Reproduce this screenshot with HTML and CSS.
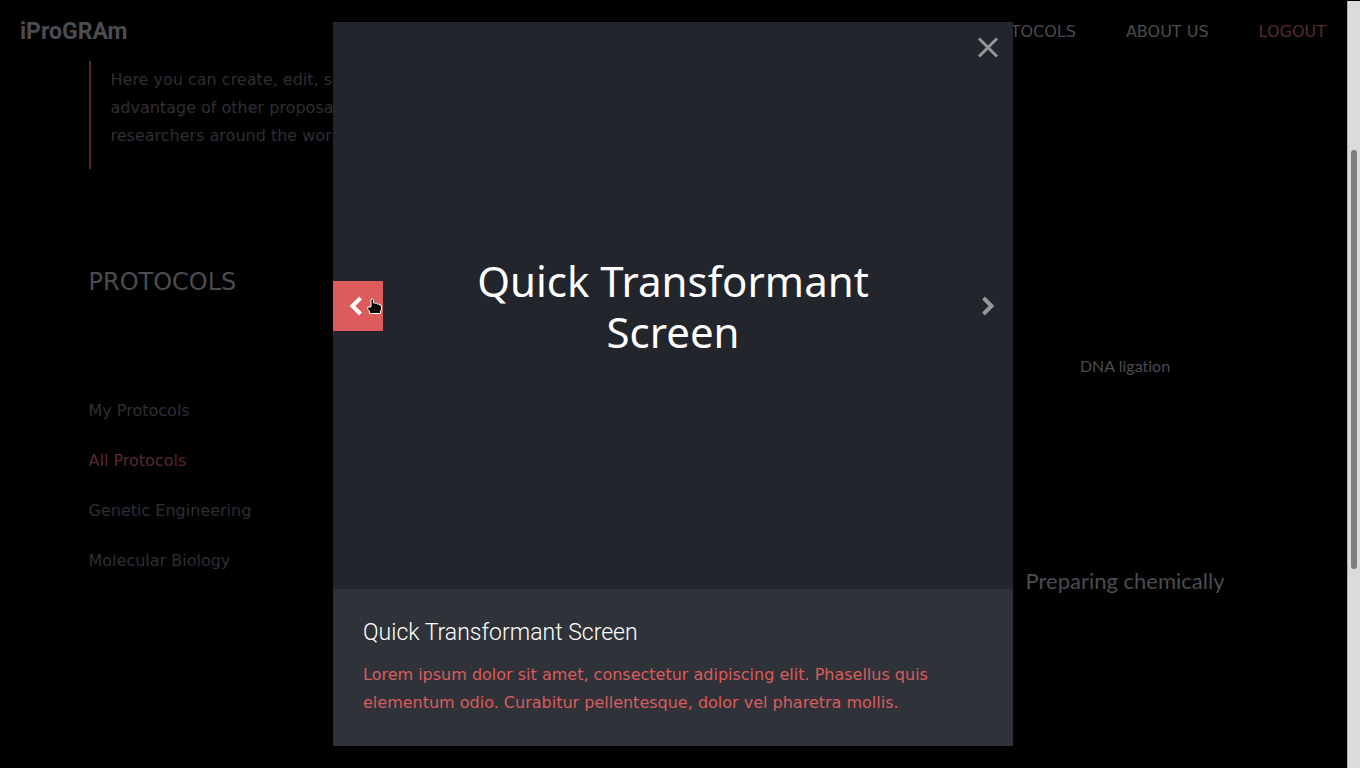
FILE: index.html
```html
<!DOCTYPE html>
<html lang="en">
<head>
<meta charset="utf-8">
<meta name="viewport" content="width=device-width, initial-scale=1">
<title>iProGRAm</title>
<link rel="stylesheet" href="styles.css">
</head>
<body>
<div class="window">
  <div class="view">
    <header class="topbar">
      <a class="logo" href="#">iProGRAm</a>
      <nav class="nav">
        <a href="#">PROTOCOLS</a>
        <a href="#">ABOUT US</a>
        <a class="accent" href="#">LOGOUT</a>
      </nav>
    </header>
    <main class="container">
      <blockquote class="intro">Here you can create, edit, share<br>advantage of other proposals<br>researchers around the world</blockquote>
      <div class="columns">
        <aside class="sidebar">
          <h1 class="heading">PROTOCOLS</h1>
          <ul class="filters">
            <li><a href="#">My Protocols</a></li>
            <li><a class="accent" href="#">All Protocols</a></li>
            <li><a href="#">Genetic Engineering</a></li>
            <li><a href="#">Molecular Biology</a></li>
          </ul>
        </aside>
        <section class="tiles">
          <a class="tile tile-small" href="#">DNA ligation</a>
          <a class="tile tile-large" href="#">Preparing chemically</a>
        </section>
      </div>
    </main>

    <div class="overlay">
      <div class="dialog" role="dialog" aria-labelledby="dialog-title">
        <div class="slide">
          <p class="slide-text">Quick Transformant Screen</p>
          <button class="control close" aria-label="Close">
            <svg width="50" height="50" viewBox="0 0 50 50"><path d="M16 16.500 34 34.500M34 16.500 16 34.500"/></svg>
          </button>
          <button class="control prev" aria-label="Previous">
            <svg width="50" height="50" viewBox="0 0 50 50"><path d="M27.500 17 19.500 25l8 8"/></svg>
          </button>
          <button class="control next" aria-label="Next">
            <svg width="50" height="50" viewBox="0 0 50 50"><path d="M20.500 17 28.500 25l-8 8"/></svg>
          </button>
          <svg class="pointer" width="16" height="17" viewBox="0 0 16 17" aria-hidden="true">
            <path d="M4 1.500Q5.500 0 6.500 1.500V5Q8 4.500 8.500 5.500 10 5 10.500 6 12 5.500 12.500 7 14.500 6.500 14.500 8.500V12L13.500 13V15.500H2.500V13L.8 11.500V9H4Z"/>
            <path class="crease" d="M4.500 12h1M7 12h1M9.500 12h1M12 12h1"/>
          </svg>
        </div>
        <div class="caption">
          <h2 class="caption-title" id="dialog-title">Quick Transformant Screen</h2>
          <p class="caption-text">Lorem ipsum dolor sit amet, consectetur adipiscing elit. Phasellus quis elementum odio. Curabitur pellentesque, dolor vel pharetra mollis.</p>
        </div>
      </div>
    </div>
  </div>
  <div class="scroll-track"><div class="scroll-thumb"></div></div>
</div>
</body>
</html>
```
FILE: styles.css
```css
* { box-sizing: border-box; }

body {
  margin: 0;
  background: #000;
  color: #2f2e34;
  font: 16px/28px "DejaVu Sans", sans-serif;
}

a { color: inherit; text-decoration: none; }

.window {
  display: flex;
  height: 100vh;
  overflow: hidden;
}

.view {
  position: relative;
  flex: 1;
  min-width: 0;
  overflow: hidden;
}

.topbar {
  display: flex;
  align-items: center;
  justify-content: space-between;
  height: 61px;
  padding: 2px 21px 0 20px;
  color: #4c4b52;
}

.logo { font: 700 23px/28px Roboto, sans-serif; }

.nav { display: flex; gap: 50px; }

.accent,
.nav .accent { color: #582a2d; }

.container {
  max-width: 1170px;
  margin: 0 auto;
}

.intro {
  margin: 0;
  padding: 5px 0 19px 20px;
  border-left: 2px solid #5a2c2e;
}

.columns {
  display: flex;
  justify-content: space-between;
}

.heading {
  margin: 99px 0 101px;
  color: #4c4b52;
  font-weight: 400;
  font-size: 24px;
  line-height: 28px;
}

.filters {
  display: grid;
  gap: 22px;
  margin: 0;
  padding: 0;
  list-style: none;
}

.tiles {
  display: grid;
  align-content: start;
  gap: 30px;
  width: 267px;
  padding-top: 64px;
  color: #4c4b52;
  font-variant-ligatures: none;
  text-align: center;
}

.tile {
  height: 267px;
  font-family: Lato, sans-serif;
}

.tile-small {
  padding-top: 119px;
  font-size: 16px;
}

.tile-large {
  padding-top: 37px;
  font-size: 22px;
}

.overlay {
  position: absolute;
  inset: 0;
  display: flex;
  align-items: center;
  justify-content: center;
  padding-right: 1px;
}

.dialog {
  width: 680px;
  max-width: 100%;
  background: #2f3239;
}

.slide {
  position: relative;
  display: flex;
  align-items: center;
  justify-content: center;
  height: 567px;
  background: #22252c;
}

.slide-text {
  width: 440px;
  margin: 0;
  color: #fff;
  font: 42px/51px "Noto Sans", sans-serif;
  text-align: center;
}

.control {
  position: absolute;
  width: 50px;
  height: 50px;
  padding: 0;
  border: 0;
  background: #22252c;
  color: #96969a;
}

.control svg {
  display: block;
  fill: none;
  stroke: currentColor;
  stroke-width: 3;
}

.close { top: 0; right: 0; }

.prev,
.next { top: calc(50% - 25px); }

.prev {
  left: 0;
  background: #db5c5a;
  color: #fff;
}

.next { right: 0; }

.prev svg,
.next svg { stroke-width: 4; }

.pointer {
  position: absolute;
  top: 276px;
  left: 34px;
  fill: #000;
  stroke: #fff;
}

.pointer .crease {
  fill: none;
  stroke: #555;
}

.caption { padding: 30px 30px 29px; }

.caption-title {
  margin: 0 0 14px;
  color: #fff;
  font: 300 23px/28px Roboto, sans-serif;
}

.caption-text {
  margin: 0;
  color: #db5c5a;
}

.scroll-track {
  width: 13px;
  margin-top: 1px;
  padding: 149px 3px 0;
  border-left: 1px solid #b0b0b0;
  background: #dbdbdb;
}

.scroll-thumb {
  width: 6px;
  height: 419px;
  border-radius: 3px;
  background: #7b7f7e;
}
```
